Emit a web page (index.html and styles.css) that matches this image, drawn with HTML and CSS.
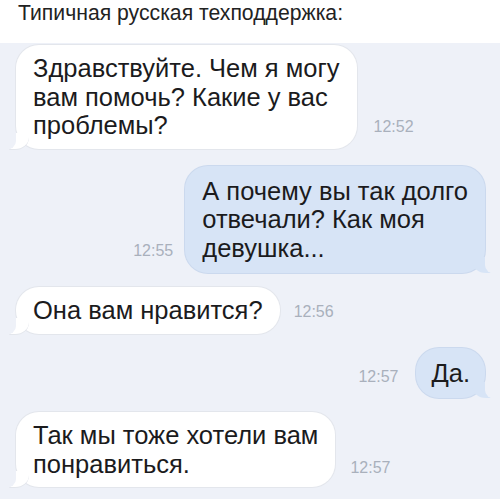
FILE: index.html
```html
<!DOCTYPE html>
<html lang="ru">
<head>
    <meta charset="UTF-8">
    <meta name="viewport" content="width=device-width, initial-scale=1.0">
    <title>Техподдержка</title>
    <link rel="stylesheet" href="styles.css">
</head>
<body>
    <header class="titulo">Типичная русская техподдержка:</header>

    <div class="chat">
        <div class="fila entrante fila-1">
            <div class="burbuja">Здравствуйте. Чем я могу<br>вам помочь? Какие у вас<br>проблемы?</div>
            <span class="hora">12:52</span>
        </div>

        <div class="fila saliente fila-2">
            <span class="hora">12:55</span>
            <div class="burbuja">А почему вы так долго<br>отвечали? Как моя<br>девушка...</div>
        </div>

        <div class="fila entrante fila-3">
            <div class="burbuja">Она вам нравится?</div>
            <span class="hora">12:56</span>
        </div>

        <div class="fila saliente fila-4">
            <span class="hora">12:57</span>
            <div class="burbuja">Да.</div>
        </div>

        <div class="fila entrante fila-5">
            <div class="burbuja">Так мы тоже хотели вам<br>понравиться.</div>
            <span class="hora">12:57</span>
        </div>
    </div>
</body>
</html>
```

FILE: styles.css
```css
body {
    font-family: "Liberation Sans", Arial, sans-serif;
    margin: 0;
    padding: 0;
    background-color: #fff;
    color: #1b1b1d;
}

.titulo {
    height: 43px;
    padding-left: 18px;
    font-size: 21.2px;
    line-height: 26px;
    box-sizing: border-box;
    padding-top: 0;
    color: #222;
}

.chat {
    background-color: #eef1f8;
    padding: 2px 0 12px 0;
    display: flex;
    flex-direction: column;
    gap: 14px;
}

.fila {
    display: flex;
    align-items: flex-end;
}

.entrante {
    padding-left: 16px;
}

.saliente {
    justify-content: flex-end;
    padding-right: 15px;
}

.fila-2 {
    margin-top: 3px;
}

.burbuja {
    position: relative;
    font-size: 25.5px;
    line-height: 28.5px;
    padding: 9px 17px 9px 17px;
    border-radius: 23px;
}

.entrante .burbuja {
    background-color: #fff;
    box-shadow: 0 0 0 1px #e3e6ec;
}

.saliente .burbuja {
    background-color: #d7e4f6;
    box-shadow: 0 0 0 1px #cbd9ee;
}

.fila-2 .burbuja {
    padding-top: 11px;
    padding-bottom: 11px;
}

/* colitas de las burbujas */
.burbuja::before,
.burbuja::after {
    content: "";
    position: absolute;
    bottom: 0;
    height: 16px;
}

.entrante .burbuja::before {
    left: -7px;
    width: 20px;
    background-color: #fff;
    border-bottom-right-radius: 14px 12px;
    box-shadow: 0 1px 0 0 #e3e6ec;
}

.entrante .burbuja::after {
    left: -12px;
    width: 12px;
    background-color: #eef1f8;
    border-bottom-right-radius: 10px 9px;
    height: 17px;
    bottom: -1px;
}

.saliente .burbuja::before {
    right: -7px;
    width: 20px;
    background-color: #d7e4f6;
    border-bottom-left-radius: 14px 12px;
}

.saliente .burbuja::after {
    right: -12px;
    width: 12px;
    background-color: #eef1f8;
    border-bottom-left-radius: 10px 9px;
    height: 17px;
    bottom: -1px;
}

.hora {
    font-size: 16px;
    color: #a9b0bc;
    margin-bottom: 13px;
}

.entrante .hora {
    margin-left: 17px;
}

.saliente .hora {
    margin-right: 12px;
}

.fila-3 .hora {
    margin-left: 14px;
    margin-bottom: 13px;
}

.fila-4 .hora {
    margin-bottom: 12px;
    margin-right: 18px;
}

.fila-5 .hora {
    margin-left: 15px;
    margin-bottom: 10px;
}

.fila-4 .burbuja {
    padding: 11px 15px 11px 15px;
}
```
